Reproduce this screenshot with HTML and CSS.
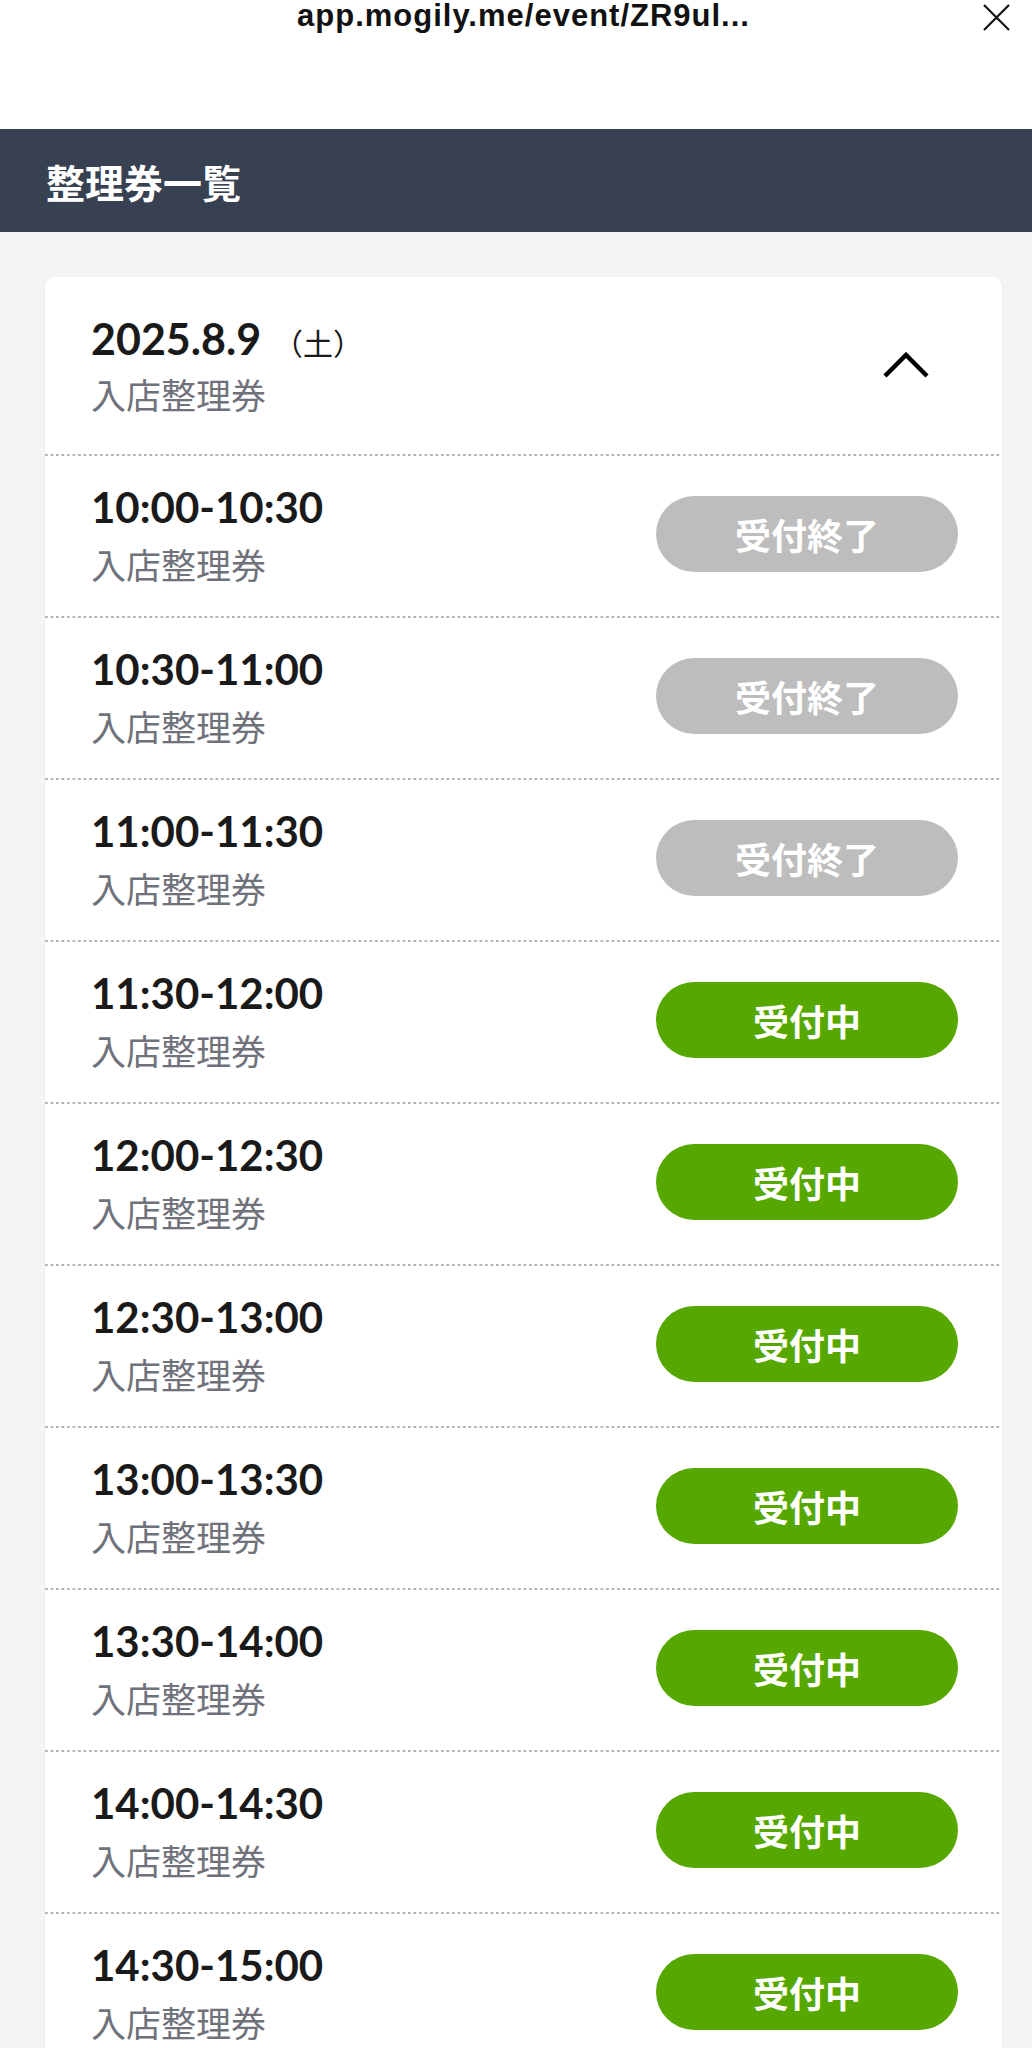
FILE: index.html
```html
<!DOCTYPE html>
<html lang="ja">
<head>
    <meta charset="UTF-8">
    <meta name="viewport" content="width=device-width, initial-scale=1.0">
    <title>整理券一覧</title>
    <link rel="stylesheet" href="styles.css">
</head>
<body>
    <div class="browser-bar">
        <span class="url">app.mogily.me/event/ZR9ul...</span>
        <button class="close" aria-label="閉じる">
            <svg width="27" height="27" viewBox="0 0 27 27">
                <path d="M1 1 L26 26 M26 1 L1 26" stroke="#111" stroke-width="2.2" fill="none"/>
            </svg>
        </button>
    </div>

    <header class="page-head">
        <h1>整理券一覧</h1>
    </header>

    <main class="content">
        <section class="day-card">
            <div class="day-head">
                <div>
                    <div class="day-date">2025.8.9<span class="dow">（土）</span></div>
                    <div class="ticket-type">入店整理券</div>
                </div>
                <svg class="chevron" width="48" height="28" viewBox="0 0 48 28">
                    <polyline points="3,25 24,4 45,25" stroke="#000" stroke-width="4.5" fill="none"/>
                </svg>
            </div>

            <ul class="slots">
                <li class="slot">
                    <div>
                        <div class="slot-time">10:00-10:30</div>
                        <div class="ticket-type">入店整理券</div>
                    </div>
                    <span class="status closed">受付終了</span>
                </li>
                <li class="slot">
                    <div>
                        <div class="slot-time">10:30-11:00</div>
                        <div class="ticket-type">入店整理券</div>
                    </div>
                    <span class="status closed">受付終了</span>
                </li>
                <li class="slot">
                    <div>
                        <div class="slot-time">11:00-11:30</div>
                        <div class="ticket-type">入店整理券</div>
                    </div>
                    <span class="status closed">受付終了</span>
                </li>
                <li class="slot">
                    <div>
                        <div class="slot-time">11:30-12:00</div>
                        <div class="ticket-type">入店整理券</div>
                    </div>
                    <span class="status open">受付中</span>
                </li>
                <li class="slot">
                    <div>
                        <div class="slot-time">12:00-12:30</div>
                        <div class="ticket-type">入店整理券</div>
                    </div>
                    <span class="status open">受付中</span>
                </li>
                <li class="slot">
                    <div>
                        <div class="slot-time">12:30-13:00</div>
                        <div class="ticket-type">入店整理券</div>
                    </div>
                    <span class="status open">受付中</span>
                </li>
                <li class="slot">
                    <div>
                        <div class="slot-time">13:00-13:30</div>
                        <div class="ticket-type">入店整理券</div>
                    </div>
                    <span class="status open">受付中</span>
                </li>
                <li class="slot">
                    <div>
                        <div class="slot-time">13:30-14:00</div>
                        <div class="ticket-type">入店整理券</div>
                    </div>
                    <span class="status open">受付中</span>
                </li>
                <li class="slot">
                    <div>
                        <div class="slot-time">14:00-14:30</div>
                        <div class="ticket-type">入店整理券</div>
                    </div>
                    <span class="status open">受付中</span>
                </li>
                <li class="slot">
                    <div>
                        <div class="slot-time">14:30-15:00</div>
                        <div class="ticket-type">入店整理券</div>
                    </div>
                    <span class="status open">受付中</span>
                </li>
            </ul>
        </section>
    </main>
</body>
</html>
```

FILE: styles.css
```css
:root {
    --head-bg: #374151;
    --page-bg: #f3f4f6;
    --text-main: #1a1a1a;
    --text-sub: #6f727b;
    --open-color: #56a800;
    --closed-color: #bdbdbd;
    --divider: #b4b4b4;
}

* {
    margin: 0;
    padding: 0;
    box-sizing: border-box;
}

body {
    background-color: var(--page-bg);
    font-family: Lato, 'Noto Sans CJK JP', sans-serif;
    color: var(--text-main);
}

/* ブラウザのURLバー */
.browser-bar {
    display: flex;
    align-items: flex-start;
    height: 129px;
    padding: 0 22px 0 64px;
    background-color: #fff;
}

.url {
    flex: 1;
    text-align: center;
    font-family: 'Liberation Sans', Arial, sans-serif;
    font-weight: 700;
    font-size: 31px;
    line-height: 32px;
    letter-spacing: 1px;
    color: #111;
}

.close {
    width: 27px;
    height: 27px;
    margin-top: 4px;
    border: none;
    background: none;
}

.close svg {
    display: block;
}

.page-head {
    display: flex;
    align-items: center;
    height: 103px;
    padding-left: 46px;
    background-color: var(--head-bg);
}

.page-head h1 {
    font-family: 'Noto Sans CJK JP', sans-serif;
    font-size: 39px;
    font-weight: 700;
    color: #fff;
}

.content {
    padding: 45px 30px 0 45px;
}

.day-card {
    background-color: #fff;
    border-radius: 10px;
    box-shadow: 0 1px 3px rgba(0, 0, 0, 0.05);
}

.day-head {
    display: flex;
    justify-content: space-between;
    align-items: center;
    padding: 36px 72px 38px 46px;
}

.day-date {
    font-size: 43px;
    font-weight: 700;
    line-height: 52px;
}

.dow {
    margin-left: 12px;
    font-family: 'Noto Sans CJK JP', sans-serif;
    font-size: 30px;
    font-weight: 400;
    line-height: 1;
}

.ticket-type {
    margin-top: 7px;
    font-family: 'Noto Sans CJK JP', sans-serif;
    font-size: 35px;
    line-height: 44px;
    color: var(--text-sub);
}

.chevron {
    display: block;
}

.slots {
    list-style: none;
}

.slot {
    display: flex;
    justify-content: space-between;
    align-items: center;
    padding: 28px 44px 30px 46px;
    background-image: linear-gradient(90deg, var(--divider) 50%, transparent 50%);
    background-size: 5.5px 2px;
    background-repeat: repeat-x;
}

.slot .ticket-type {
    margin-top: 10px;
}

.slot-time {
    font-size: 42px;
    font-weight: 700;
    line-height: 50px;
}

.status {
    width: 302px;
    height: 76px;
    border-radius: 38px;
    font-family: 'Noto Sans CJK JP', sans-serif;
    font-size: 36px;
    font-weight: 700;
    line-height: 76px;
    text-align: center;
    color: #fff;
}

.open {
    background-color: var(--open-color);
}

.closed {
    background-color: var(--closed-color);
}
```
